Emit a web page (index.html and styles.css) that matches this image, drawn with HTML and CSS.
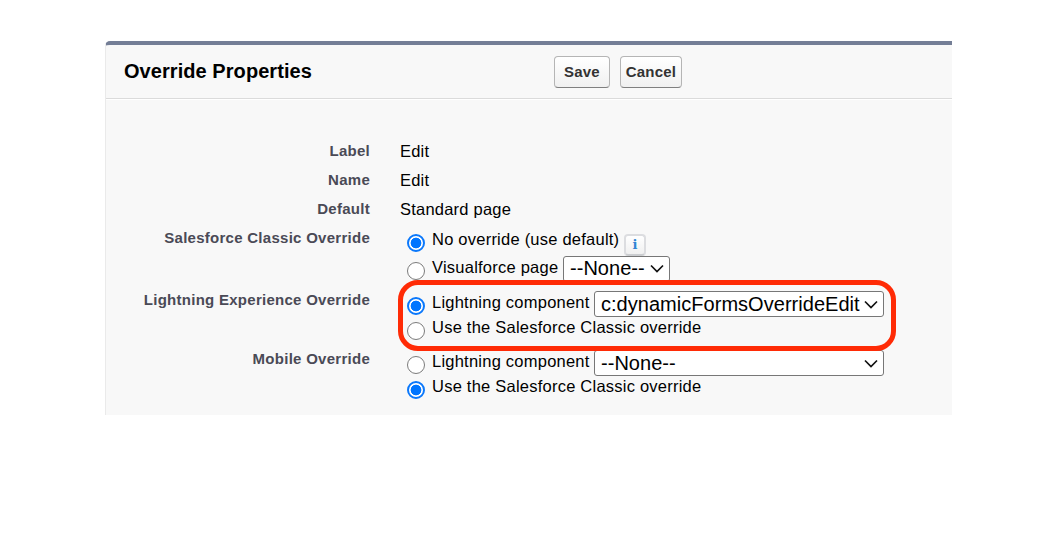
FILE: index.html
```html
<!DOCTYPE html>
<html lang="en">
<head>
<meta charset="utf-8">
<title>Override Properties</title>
<link rel="stylesheet" href="styles.css">
</head>
<body>
<main class="panel">
  <header class="header">
    <h1 class="title">Override Properties</h1>
    <div class="actions">
      <button class="btn btn-save">Save</button>
      <button class="btn btn-cancel">Cancel</button>
    </div>
  </header>
  <div class="form">
    <div class="row"><div class="label">Label</div><div class="value">Edit</div></div>
    <div class="row"><div class="label">Name</div><div class="value">Edit</div></div>
    <div class="row"><div class="label">Default</div><div class="value">Standard page</div></div>
    <div class="row row-classic">
      <div class="label">Salesforce Classic Override</div>
      <div class="options">
        <label class="option"><span class="radio checked"></span><span class="text t-no">No override (use default)</span><span class="info">i</span></label>
        <label class="option"><span class="radio"></span><span class="text t-vf">Visualforce page</span><span class="select select-small">--None--<svg class="chevron" viewBox="0 0 14 9"><path d="M1 1.500 7 7.500l6-6"/></svg></span></label>
      </div>
    </div>
    <div class="row row-lightning">
      <div class="label">Lightning Experience Override</div>
      <div class="options">
        <label class="option"><span class="radio checked"></span><span class="text t-lc">Lightning component</span><span class="select">c:dynamicFormsOverrideEdit<svg class="chevron" viewBox="0 0 14 9"><path d="M1 1.500 7 7.500l6-6"/></svg></span></label>
        <label class="option"><span class="radio"></span><span class="text">Use the Salesforce Classic override</span></label>
        <div class="highlight"></div>
      </div>
    </div>
    <div class="row row-mobile">
      <div class="label">Mobile Override</div>
      <div class="options">
        <label class="option"><span class="radio"></span><span class="text t-lc">Lightning component</span><span class="select">--None--<svg class="chevron" viewBox="0 0 14 9"><path d="M1 1.500 7 7.500l6-6"/></svg></span></label>
        <label class="option"><span class="radio checked"></span><span class="text">Use the Salesforce Classic override</span></label>
      </div>
    </div>
  </div>
</main>
</body>
</html>
```
FILE: styles.css
```css
* { box-sizing: border-box; }
body {
  margin: 0;
  padding: 41px 107px 0 105px;
  background: #fff;
  color: #000;
  font-family: "Liberation Sans", Arial, sans-serif;
  font-size: 16.5px;
}
.panel {
  height: 374px;
  background: #f8f8f8;
  border-top: 4px solid #747e96;
  border-left: 1px solid #eaeaea;
  border-top-left-radius: 5px;
}
.header {
  display: flex;
  height: 54px;
  padding: 11px 0 0 18px;
  border-bottom: 1px solid #dbdbdb;
  box-shadow: 0 1px #fff;
}
.title {
  width: 430px;
  margin: 0;
  font-size: 20px;
  line-height: 30px;
  letter-spacing: 0.06px;
  white-space: nowrap;
}
.actions { display: flex; gap: 10px; }
.btn {
  height: 32px;
  padding: 0 0 1px;
  border: 1px solid #b5b5b5;
  border-bottom-color: #7f7f7f;
  border-radius: 4px;
  background: linear-gradient(#fff, #f0f0f0);
  color: #333;
  font: bold 15px "Liberation Sans", Arial, sans-serif;
  letter-spacing: 0.2px;
}
.btn-save { width: 56px; }
.btn-cancel { width: 62px; }
.form { padding-top: 38px; }
.row {
  display: grid;
  grid-template-columns: 264px 1fr;
  column-gap: 30px;
  height: 29px;
  white-space: nowrap;
}
.row-classic { height: 62px; }
.row-lightning { height: 59px; }
.label {
  color: #4a4a56;
  font-size: 15px;
  font-weight: bold;
  letter-spacing: 0.27px;
  line-height: 28px;
  text-align: right;
}
.value { line-height: 28px; letter-spacing: 0.22px; }
.options { position: relative; padding: 4px 0 0 7px; }
.row-classic .options { padding-top: 2px; }
.option { display: flex; align-items: center; height: 25px; }
.row-classic .option { height: 28px; }
.text { padding-bottom: 2px; line-height: 24px; letter-spacing: 0.23px; }
.t-no { width: 192px; }
.t-vf { width: 131px; }
.t-lc { width: 162px; }
.radio {
  flex: none;
  width: 18px;
  height: 18px;
  margin: 6px 7px 0 0;
  border: 1.500px solid #7b7b7b;
  border-radius: 50%;
  background: #fff;
}
.radio.checked {
  border: 2px solid #0b78fb;
  background: radial-gradient(circle, #0075ff 5px, #fff 5.700px);
}
.info {
  width: 22px;
  height: 22px;
  margin-top: 9px;
  border: 2px solid #dcdde0;
  border-bottom-color: #cbcdd0;
  border-radius: 4px;
  background: linear-gradient(#fff, #f0f0f0);
  color: #2f85d4;
  font: bold 13px/18px "DejaVu Serif", serif;
  text-align: center;
}
.select {
  flex: none;
  display: flex;
  align-items: center;
  justify-content: space-between;
  width: 290px;
  height: 26px;
  margin-top: 3px;
  padding: 0 5px 0 6px;
  border: 1px solid #777;
  border-radius: 3px;
  background: #fff;
  font-size: 20px;
  letter-spacing: 0.03px;
}
.select-small { width: 107px; margin-top: 1px; }
.chevron {
  flex: none;
  width: 14px;
  height: 9px;
  fill: none;
  stroke: #111;
  stroke-width: 1.700;
}
/* Callout ring drawn over the Lightning options */
.highlight {
  position: absolute;
  z-index: 1;
  top: -6px;
  left: -2px;
  width: 498px;
  height: 71px;
  border: 5px solid #ff2b06;
  border-radius: 20px;
}
```
